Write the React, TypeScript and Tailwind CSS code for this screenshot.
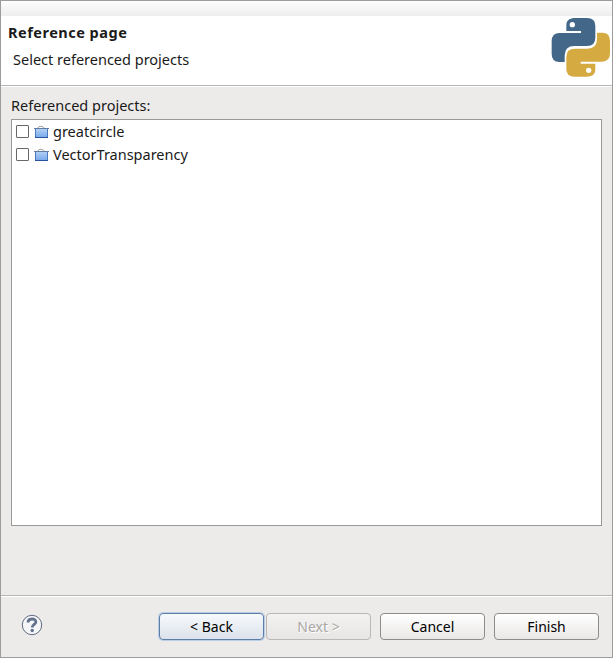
import React from "react";

const LOBE =
  "M46 26C46 9 56 3 74 3H108Q133 3 133 26V62Q133 87 108 87H70Q41 87 41 116V135H25Q2 135 2 110V73Q2 48 26 48H90V42H46Z";

function PythonLogo() {
  return (
    <svg className="h-[60px] w-[60px]" viewBox="0 0 180 180">
      <g fill="#436788">
        <path d={LOBE} />
        <circle cx="64" cy="23" r="8" fill="#fff" />
      </g>
      <g fill="#d5aa41" transform="rotate(180 89.5 91)">
        <path d={LOBE} />
        <circle cx="66" cy="22" r="8" fill="#fff" />
      </g>
    </svg>
  );
}

function ProjectIcon() {
  return (
    <svg className="h-[14px] w-[16px] shrink-0" viewBox="0 0 16 14">
      <defs>
        <linearGradient id="folder" x1="0" y1="0" x2="0" y2="1">
          <stop offset="0" stopColor="#b4d2f6" />
          <stop offset="1" stopColor="#78a8ec" />
        </linearGradient>
      </defs>
      <path d="M5 3C5.500 .8 10 .8 11 3" fill="none" stroke="#98948e" />
      <path d="M2.500 3.500V12.500H14.500V3.500Z" fill="url(#folder)" stroke="#4c78bd" />
      <path d="M1 3.500H16" stroke="#637ba0" />
      <path d="M2 12.500H15" stroke="#29539c" />
    </svg>
  );
}

function Project({ name }: { name: string }) {
  return (
    <div className="flex h-[23px] items-center">
      <span className="mr-[4px] h-[13px] w-[13px] shrink-0 rounded-[1px] border border-[#686868] bg-white" />
      <ProjectIcon />
      <span className="mb-[2px] ml-[4px]">{name}</span>
    </div>
  );
}

const BUTTON =
  "flex h-[27px] w-[105px] items-center justify-center rounded-[4px] border pt-px text-[14px] ";

export default function App() {
  return (
    <div className="flex h-[658px] w-[613px] flex-col overflow-hidden whitespace-nowrap border border-[#9c9c9c] bg-[#edebea] font-['Noto_Sans',sans-serif] text-[14.5px] leading-[20px] text-[#1a1a1a]">
      <div className="h-[15px] shrink-0 bg-linear-to-b from-[#fdfdfd] to-[#eeeeee]" />
      <header className="flex h-[70px] shrink-0 justify-between border-b border-[#b8b6b4] bg-white">
        <div className="pl-[7px] pt-[6px]">
          <h1 className="text-[14.5px] font-bold tracking-[0.5px]">Reference page</h1>
          <p className="mt-[7px] pl-[5px]">Select referenced projects</p>
        </div>
        <div className="pr-px pt-px">
          <PythonLogo />
        </div>
      </header>
      <main className="flex h-[509px] shrink-0 flex-col border-t border-white px-[10px] pt-[8px]">
        <div>Referenced projects:</div>
        <div className="mt-[4px] h-[407px] border border-[#989898] bg-white pl-[4px]">
          <Project name="greatcircle" />
          <Project name="VectorTransparency" />
        </div>
      </main>
      <footer className="flex grow items-start border-t border-[#b8b6b4] pr-[13px] pt-[17px] shadow-[inset_0_1px_0_#fff] text-black">
        <svg className="ml-[20px] mt-[1px] h-[22px] w-[22px]" viewBox="0 0 22 22" fill="none">
          <circle cx="11" cy="11" r="9.700" fill="#f5f6f8" stroke="#606b80" />
          <path d="M7 8.600C7 3.900 14.900 3.900 14.900 7.900C14.900 10.500 11.200 10.300 11.200 13.500" stroke="#62718d" strokeWidth="2.800" />
          <circle cx="11.200" cy="16.500" r="1.700" fill="#62718d" />
        </svg>
        <div className="ml-auto flex">
          <button className={BUTTON + "border-[#5b7da8] bg-linear-to-b from-[#f7fafd] to-[#dce2ea] shadow-[0_0_0_1px_#b9cde5]"}>&lt; Back</button>
          <button className={BUTTON + "ml-[2px] border-[#bab8b6] bg-linear-to-b from-[#f3f2f1] to-[#e8e6e4] text-[#aaa8a6] [text-shadow:1px_1px_0_#fff]"}>Next &gt;</button>
          <button className={BUTTON + "ml-[9px] border-[#8e8c8a] bg-linear-to-b from-white to-[#e9e8e6]"}>Cancel</button>
          <button className={BUTTON + "ml-[9px] border-[#8e8c8a] bg-linear-to-b from-white to-[#e9e8e6]"}>Finish</button>
        </div>
      </footer>
    </div>
  );
}
